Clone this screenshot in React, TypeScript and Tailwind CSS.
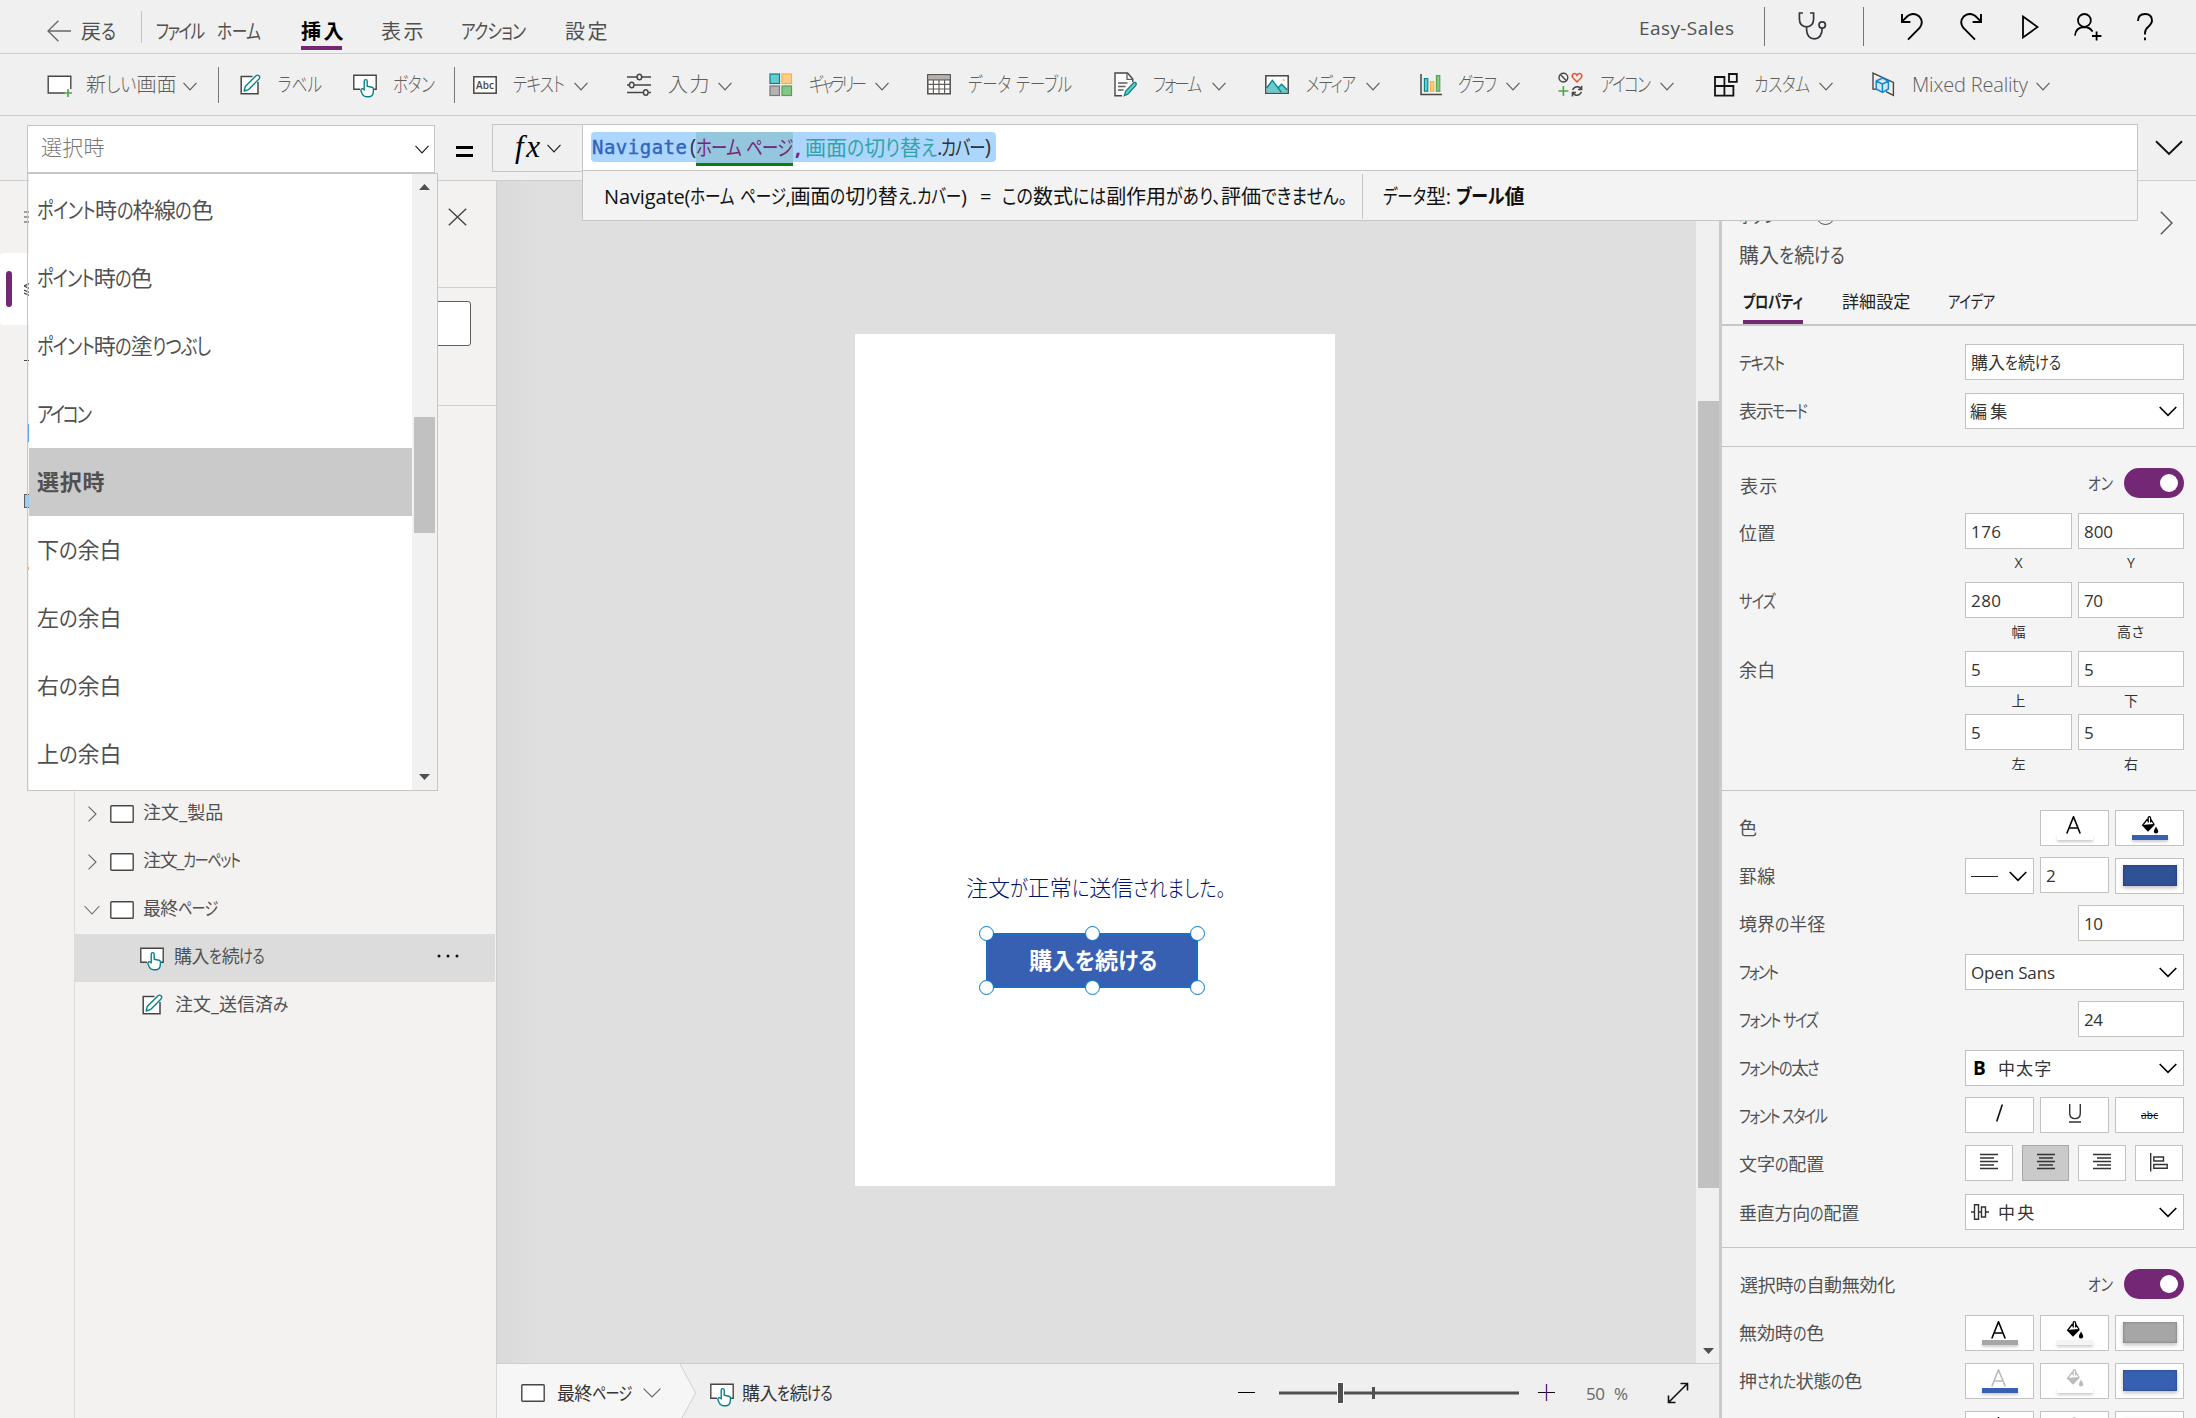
import { useLayoutEffect, useRef, useState } from 'react';
import type { ReactNode } from 'react';
import clsx from 'clsx';

const KANA_RUN = /([\u3040-\u30ff\u3001\u3002]+)/;
const KANJI_END = /[\u4e00-\u9fff]$/;

// Single line label: condenses its kana runs so the text fills the width of the box
function T({ children, className }: { children: string; className?: string }) {
    const box = useRef<HTMLSpanElement>(null);
    const [fit, setFit] = useState<{ scale: number; spacing: number; widths: number[] } | null>(null);
    const runs = children.split(KANA_RUN);

    useLayoutEffect(() => {
        if (!box.current) return;
        const widths = Array.from(box.current.children).map((el) => el.getBoundingClientRect().width);
        const kana = widths.filter((_, i) => i % 2 === 1).reduce((a, b) => a + b, 0);
        const other = widths.filter((_, i) => i % 2 === 0).reduce((a, b) => a + b, 0);
        const bearing = KANJI_END.test(children) ? parseFloat(getComputedStyle(box.current).fontSize) * 0.07 : 0;
        const target = box.current.clientWidth + bearing;
        const scale = kana > 0 ? Math.min(1, Math.max(0.78, (target - other) / kana)) : 1;
        const gaps = Math.max(1, children.length - 1);
        const spacing = children.length > 1 ? (target - other - kana * scale) / gaps : 0;
        setFit({ scale, spacing, widths });
    }, [children]);

    return (
        <span ref={box} className={clsx('block shrink-0 whitespace-pre leading-none', className)}>
            {runs.map((run, i) => {
                if (i % 2 === 0) return <span key={i} style={{ letterSpacing: fit?.spacing }}>{run}</span>;
                const width = fit ? fit.widths[i] * fit.scale + fit.spacing * run.length : undefined;
                return (
                    <span key={i} className="inline-block [font-feature-settings:'palt']" style={{ width }}>
                        <span
                            className="inline-block origin-left"
                            style={fit ? { letterSpacing: fit.spacing / fit.scale, transform: `scaleX(${fit.scale})` } : undefined}
                        >
                            {run}
                        </span>
                    </span>
                );
            })}
        </span>
    );
}

function Svg({ w, h, className, children }: { w: number; h: number; className?: string; children: ReactNode }) {
    return (
        <svg width={w} height={h} viewBox={`0 0 ${w} ${h}`} fill="none" className={clsx('shrink-0', className)}>
            {children}
        </svg>
    );
}

function Chevron({ className }: { className?: string }) {
    return (
        <Svg w={14} h={9} className={className}>
            <path d="M0.5 0.8 L7 7.8 L13.5 0.8" stroke="currentColor" strokeWidth="1.2" />
        </Svg>
    );
}

function SelectChevron() {
    return (
        <Svg w={18} h={11} className="ml-auto text-black">
            <path d="M0.7 1 L9 9.4 L17.3 1" stroke="currentColor" strokeWidth="1.6" />
        </Svg>
    );
}

function ScreenIcon() {
    return (
        <Svg w={24} h={18}>
            <rect x="0.8" y="0.8" width="22.4" height="16.4" rx="0.8" fill="#fff" stroke="#484644" strokeWidth="1.4" />
        </Svg>
    );
}

function ButtonIcon({ className }: { className?: string }) {
    return (
        <Svg w={24} h={24} className={className}>
            <path d="M7 15.3 H0.8 V1.3 H23.2 V15.3 H21" fill="#fff" stroke="#484644" strokeWidth="1.4" />
            <path d="M11.2 16 V7.2 Q11.2 5.6 12.7 5.6 Q14.2 5.6 14.2 7.2 V12.3 L19 13.2 Q20.6 13.6 20.5 15.4 L20.2 18.6 Q19.6 22.7 15.6 22.7 H13.4 Q10.6 22.7 9.2 19.8 L8 17 Q7.6 14.7 9.4 14.6 Q10.4 14.6 11.2 16 Z" fill="#fff" stroke="#038387" strokeWidth="1.4" strokeLinejoin="round" />
        </Svg>
    );
}

function LabelIcon({ className }: { className?: string }) {
    return (
        <Svg w={21} h={21} className={className}>
            <path d="M12.5 2.5 H1.2 V19.8 H18 V8" fill="#fff" stroke="#484644" strokeWidth="1.5" />
            <path d="M4.2 17 L5.2 12.6 L15.8 1.9 Q17.4 0.4 19 1.8 Q20.4 3.3 19 4.9 L8.4 15.7 Z" fill="#fff" stroke="#038387" strokeWidth="1.4" strokeLinejoin="round" />
        </Svg>
    );
}

function NewScreenIcon() {
    return (
        <Svg w={26} h={23}>
            <path d="M18 18 H1.2 V1.2 H23.8 V14" fill="#fff" stroke="#484644" strokeWidth="1.4" />
            <path d="M21 14 V22 M17 18 H25" stroke="#4ca64c" strokeWidth="1.6" />
        </Svg>
    );
}

function AbcIcon() {
    return (
        <Svg w={24} h={18}>
            <rect x="0.8" y="0.8" width="22.4" height="16.4" fill="#fff" stroke="#484644" strokeWidth="1.5" />
            <text x="12" y="13" textAnchor="middle" fontSize="10" fontWeight="600" fill="#484644" fontFamily="Open Sans, sans-serif" textLength="18">Abc</text>
        </Svg>
    );
}

function InputIcon() {
    return (
        <Svg w={24} h={24}>
            <g stroke="#484644" strokeWidth="1.5">
                <path d="M0 4 H10 M15 4 H24 M0 12 H2 M7.5 12 H24 M0 19.5 H16 M21.5 19.5 H24" />
                <ellipse cx="12.4" cy="4" rx="2.3" ry="2.8" />
                <ellipse cx="4.7" cy="12" rx="2.3" ry="2.8" />
                <ellipse cx="18.8" cy="19.5" rx="2.3" ry="2.8" />
            </g>
        </Svg>
    );
}

function GalleryIcon() {
    return (
        <Svg w={24} h={24}>
            <rect x="1" y="1" width="9.5" height="9.5" fill="#69cbcb" stroke="#038387" strokeWidth="1.2" />
            <rect x="13" y="1" width="9.5" height="9.5" fill="#ffcf87" stroke="#ffaa44" strokeWidth="1.2" />
            <rect x="1" y="13" width="9.5" height="9.5" fill="#b3b3b3" stroke="#797775" strokeWidth="1.2" />
            <rect x="13" y="13" width="9.5" height="9.5" fill="#85c585" stroke="#4ca64c" strokeWidth="1.2" />
        </Svg>
    );
}

function TableIcon() {
    return (
        <Svg w={24} h={21}>
            <rect x="0.8" y="0.8" width="22.4" height="19" fill="#fff" stroke="#484644" strokeWidth="1.4" />
            <rect x="1.4" y="1.4" width="21.2" height="4" fill="#b3b0ad" />
            <path d="M0.8 5.8 H23.2 M0.8 10.4 H23.2 M0.8 15 H23.2 M6.4 5.8 V19.6 M12 5.8 V19.6 M17.6 5.8 V19.6" stroke="#605e5c" strokeWidth="1.2" />
        </Svg>
    );
}

function FormIcon() {
    return (
        <Svg w={23} h={25}>
            <path d="M8 23.8 H1 V1 H13.5 L18.8 7 V10" fill="#fff" stroke="#484644" strokeWidth="1.4" />
            <path d="M13 1 V7.4 H19 M4 11 H13.5 M4 14.5 H11.5 M4 18 H9.5" stroke="#605e5c" strokeWidth="1.3" />
            <path d="M10.4 23.6 L11.6 19.4 L19.6 10.8 Q21 9.8 22 11 Q22.6 12.2 21.8 13.4 L14 22 Z" fill="#69cbcb" stroke="#038387" strokeWidth="1.3" />
        </Svg>
    );
}

function MediaIcon() {
    return (
        <Svg w={24} h={19}>
            <rect x="0.8" y="0.8" width="22.4" height="17.4" fill="#fff" stroke="#484644" strokeWidth="1.5" />
            <path d="M1.6 13 L7.4 5.4 L13 12.8 L16.6 9.2 L22.4 15 V17.4 H1.6 Z" fill="#69cbcb" />
            <path d="M1.6 13 L7.4 5.4 L16.4 17.4 M13 12.8 L16.6 9.2 L22.4 15" stroke="#038387" strokeWidth="1.3" />
            <circle cx="18.6" cy="5" r="1" fill="#ffaa44" />
        </Svg>
    );
}

function ChartIcon() {
    return (
        <Svg w={22} h={23}>
            <path d="M1 1 V21.4 H22" stroke="#484644" strokeWidth="1.5" />
            <rect x="4.4" y="5.6" width="3.4" height="12.6" fill="#69cbcb" stroke="#038387" strokeWidth="1.1" />
            <rect x="10.4" y="8.6" width="3.4" height="9.6" fill="#ffcf87" stroke="#ffaa44" strokeWidth="1.1" />
            <rect x="16.4" y="2.6" width="3.4" height="15.6" fill="#85c585" stroke="#4ca64c" strokeWidth="1.1" />
        </Svg>
    );
}

function IconsIcon() {
    return (
        <Svg w={25} h={25}>
            <circle cx="5.4" cy="5.6" r="4.4" stroke="#484644" strokeWidth="1.4" />
            <path d="M2.4 2.6 L8.4 8.8" stroke="#484644" strokeWidth="1.4" />
            <path d="M19 10 L14.6 5.4 Q13.4 2.8 15.6 1.6 Q17.8 1 19 3.4 Q20.2 1 22.4 1.6 Q24.6 2.8 23.4 5.4 Z" stroke="#e8502d" strokeWidth="1.5" />
            <path d="M5.4 14 V24 M0.4 19 H10.4" stroke="#4ca64c" strokeWidth="1.6" />
            <path d="M14.6 17.8 Q16.4 14.2 20 14.8 Q22 15.2 23.2 17 M23.6 13.8 V17.4 H20 M23.4 20 Q21.8 23.6 18.2 23.2 Q16 22.8 14.8 21 M14.4 24.4 V20.6 H18" stroke="#484644" strokeWidth="1.5" />
        </Svg>
    );
}

function CustomIcon() {
    return (
        <Svg w={24} h={24}>
            <path d="M1 13 V4 H10.4 V22.6 M1 13 H19.4 V22.6 H1 V13 M15 1 H22.8 V8.8 H15 Z" stroke="#111" strokeWidth="1.8" />
        </Svg>
    );
}

function MixedRealityIcon() {
    return (
        <Svg w={23} h={25}>
            <path d="M5 17.4 L1 17 V1.2 L21.4 10.4 V23.4 L14 19.6" stroke="#484644" strokeWidth="1.4" />
            <path d="M4.2 9 L10.4 6 L16.4 9 V17 L10.4 20.4 L4.2 17 Z M4.2 9 L10.4 12 L16.4 9 M10.4 12 V20.4" fill="#cfe6f7" stroke="#1a86d0" strokeWidth="1.5" strokeLinejoin="round" />
        </Svg>
    );
}

const tools: { icon: ReactNode; iconCls: string; label: string; labelCls: string; chevron?: string; divider?: string }[] = [
    { icon: <NewScreenIcon />, iconCls: 'ml-[47px] w-[26px] pt-1', label: '新しい画面', labelCls: 'ml-[13px] w-[89px]', chevron: 'ml-2', divider: 'ml-[21px]' },
    { icon: <LabelIcon />, iconCls: 'ml-[21px] w-[21px]', label: 'ラベル', labelCls: 'ml-[17px] w-[44px]' },
    { icon: <ButtonIcon />, iconCls: 'ml-[31px] w-[24px] pt-0.5', label: 'ボタン', labelCls: 'ml-[16px] w-[42px]', divider: 'ml-[19px]' },
    { icon: <AbcIcon />, iconCls: 'ml-[18px] w-[24px]', label: 'テキスト', labelCls: 'ml-[16px] w-[52px]', chevron: 'ml-[9px]' },
    { icon: <InputIcon />, iconCls: 'ml-[39px] w-[24px]', label: '入力', labelCls: 'ml-[17px] w-[40px]', chevron: 'ml-[10px]' },
    { icon: <GalleryIcon />, iconCls: 'ml-[37px] w-[24px]', label: 'ギャラリー', labelCls: 'ml-[16px] w-[58px]', chevron: 'ml-[8px]' },
    { icon: <TableIcon />, iconCls: 'ml-[38px] w-[24px]', label: 'データ テーブル', labelCls: 'ml-[17px] w-[104px]' },
    { icon: <FormIcon />, iconCls: 'ml-[42px] w-[23px]', label: 'フォーム', labelCls: 'ml-[16px] w-[49px]', chevron: 'ml-[10px]' },
    { icon: <MediaIcon />, iconCls: 'ml-[39px] w-[24px]', label: 'メディア', labelCls: 'ml-[17px] w-[50px]', chevron: 'ml-[10px]' },
    { icon: <ChartIcon />, iconCls: 'ml-[40px] w-[22px]', label: 'グラフ', labelCls: 'ml-[16px] w-[39px]', chevron: 'ml-[9px]' },
    { icon: <IconsIcon />, iconCls: 'ml-[38px] w-[25px]', label: 'アイコン', labelCls: 'ml-[17px] w-[51px]', chevron: 'ml-[9px]' },
    { icon: <CustomIcon />, iconCls: 'ml-[40px] w-[24px]', label: 'カスタム', labelCls: 'ml-[16px] w-[56px]', chevron: 'ml-[9px]' },
    { icon: <MixedRealityIcon />, iconCls: 'ml-[39px] w-[23px]', label: 'Mixed Reality', labelCls: 'ml-[17px] w-[116px]', chevron: 'ml-[8px]' },
];

function TitleBar() {
    return (
        <div className="flex h-[54px] items-center border-b border-[#cdcdcd] pr-[43px] pl-[47px] text-xl text-[#505050]">
            <Svg w={24} h={22} className="mt-[9px]">
                <path d="M11.4 0.8 L1 11 L11.4 21.2 M1 11 H24" stroke="#666" strokeWidth="1.3" />
            </Svg>
            <T className="mt-[10px] ml-[10px] w-[35px]">戻る</T>
            <div className="ml-[25px] h-8 w-px bg-[#c4c4c4]" />
            <T className="mt-[10px] ml-[14px] w-[49px]">ファイル</T>
            <T className="mt-[10px] ml-[12px] w-[44px]">ホーム</T>
            <div className="mt-[19px] ml-[40px] border-b-4 border-[#742774] pb-1">
                <T className="w-[41px] font-bold text-black">挿入</T>
            </div>
            <T className="mt-[10px] ml-[39px] w-[41px]">表示</T>
            <T className="mt-[10px] ml-[39px] w-[65px]">アクション</T>
            <T className="mt-[10px] ml-[39px] w-[41px]">設定</T>
            <T className="mt-[4px] ml-auto w-[95px] text-[19px]">Easy-Sales</T>
            <div className="ml-[30px] h-[39px] w-px bg-[#777]" />
            <Svg w={29} h={28} className="-mt-px ml-[33px]">
                <path d="M5 1 H1.4 V7 Q1.6 14.6 8.6 14.8 Q15.4 14.6 15.6 7 V1 H12 M8.6 14.8 V18 Q9 26.6 16.6 26.8 Q24 26.4 24.2 16" stroke="#33373d" strokeWidth="1.7" />
                <circle cx="24.2" cy="13" r="3.2" stroke="#33373d" strokeWidth="1.7" />
            </Svg>
            <div className="ml-[36px] h-[39px] w-px bg-[#777]" />
            <Svg w={22} h={28} className="ml-[37px] text-black">
                <path d="M1 1 V9 H9.4 M1 8.6 L6.6 3 Q12.4 -1.4 18.4 3.6 Q23 8.8 18.8 14.6 L7 26.6" stroke="currentColor" strokeWidth="1.9" />
            </Svg>
            <Svg w={22} h={28} className="ml-[37px] text-black">
                <path d="M21 1 V9 H12.6 M21 8.6 L15.4 3 Q9.6 -1.4 3.6 3.6 Q-1 8.8 3.2 14.6 L15 26.6" stroke="currentColor" strokeWidth="1.9" />
            </Svg>
            <Svg w={17} h={24} className="ml-[40px] text-black">
                <path d="M1 1.6 L15.6 12 L1 22.4 Z" stroke="currentColor" strokeWidth="1.8" />
            </Svg>
            <Svg w={28} h={28} className="ml-[35px] text-black">
                <circle cx="10.4" cy="7.4" r="6.4" stroke="currentColor" strokeWidth="1.8" />
                <path d="M1 22.6 Q1.6 14.4 10.4 14 Q16 14.2 18.6 18.6 M22.6 18.4 V27.4 M18 23 H27.4" stroke="currentColor" strokeWidth="1.8" />
            </Svg>
            <Svg w={16} h={28} className="ml-[35px] text-black">
                <path d="M1 8 Q1 1 8 1 Q15 1 15 7.6 Q15 10.6 11.6 13.4 Q8 16.2 8 20 V21.6 M8 24.6 V27.2" stroke="currentColor" strokeWidth="1.9" />
            </Svg>
        </div>
    );
}

function Ribbon() {
    return (
        <div className="flex h-[62px] items-center border-b border-[#cdcdcd] text-xl text-[#605e5c]">
            {tools.map((tool) => (
                <div key={tool.label} className="flex items-center">
                    <div className={clsx('shrink-0', tool.iconCls)}>{tool.icon}</div>
                    <T className={clsx('mt-px font-light', tool.labelCls)}>{tool.label}</T>
                    {tool.chevron && <Chevron className={clsx('mt-1', tool.chevron)} />}
                    {tool.divider && <div className={clsx('h-9 w-px bg-[#777]', tool.divider)} />}
                </div>
            ))}
        </div>
    );
}

function FormulaBar() {
    return (
        <div className="relative z-10 flex h-[65px] border-b border-[#cdcdcd] pt-2">
            <div className="mt-px ml-[27px] flex h-[48px] w-[408px] items-center border border-[#c8c6c4] bg-white pr-[5px] pl-[13px]">
                <T className="-mt-[3px] w-[62px] text-[21px] font-light text-[#777]">選択時</T>
                <Chevron className="ml-auto text-[#222]" />
            </div>
            <div className="mt-[22px] ml-[21px] h-[11px] w-[17px] border-y-[3px] border-black" />
            <div className="ml-[19px] flex h-[48px] w-[90px] items-center border border-r-0 border-[#c8c6c4] pl-[22px]">
                <T className="-mt-1 w-[25px] font-['Liberation_Serif',serif] text-[31px] text-black italic">fx</T>
                <Chevron className="ml-[7px] text-[#222]" />
            </div>
            <div className="h-[97px] w-[1556px] border border-[#c8c6c4] bg-[#f3f3f3]">
                <div className="flex h-[46px] items-center border-b border-[#c8c6c4] bg-white pl-[8px]">
                    <div className="mb-px flex h-[30px] w-[405px] items-center rounded bg-[#add6ff] text-[21px]">
                        <T className="ml-px w-[95px] font-['DejaVu_Sans_Mono',monospace] text-[19px] text-[#3165bb] [-webkit-text-stroke:0.4px_#3165bb]">Navigate</T>
                        <T className="ml-[3px] w-[6px] text-[#333]">(</T>
                        <div className="-mb-1 flex h-[34px] items-center border-b-[3px] border-[#107c10] bg-[#94c6dd]">
                            <T className="w-[97px] text-[#742774]">ホーム ページ</T>
                        </div>
                        <T className="ml-[2px] w-[8px] font-bold text-[#742774]">,</T>
                        <T className="ml-[2px] w-[132px] text-[#30a5a5]">画面の切り替え</T>
                        <T className="w-[54px] text-[#333]">.カバー)</T>
                    </div>
                </div>
                <div className="flex h-[50px] items-center pt-px text-[20px] text-[#111]">
                    <T className="ml-[21px] w-[363px]">Navigate(ホーム ページ,画面の切り替え.カバー)</T>
                    <T className="ml-[13px] w-[12px]">=</T>
                    <T className="ml-[10px] w-[345px]">この数式には副作用があり、評価できません。</T>
                    <div className="ml-[15px] h-[45px] w-px bg-[#c8c6c4]" />
                    <T className="ml-[20px] w-[68px]">データ型:</T>
                    <T className="ml-[5px] w-[67px] font-bold">ブール値</T>
                </div>
            </div>
            <Svg w={28} h={16} className="mt-[16px] ml-[17px]">
                <path d="M1 1.2 L14 14 L27 1.2" stroke="#111" strokeWidth="1.9" />
            </Svg>
        </div>
    );
}

const options = [
    { label: 'ポイント時の枠線の色', cls: 'w-[175px]' },
    { label: 'ポイント時の色', cls: 'w-[114px]' },
    { label: 'ポイント時の塗りつぶし', cls: 'w-[174px]' },
    { label: 'アイコン', cls: 'w-[55px]' },
    { label: '選択時', cls: 'w-[66px] font-bold' },
    { label: '下の余白', cls: 'w-[83px]' },
    { label: '左の余白', cls: 'w-[83px]' },
    { label: '右の余白', cls: 'w-[83px]' },
    { label: '上の余白', cls: 'w-[83px]' },
];

function PropertyDropdown() {
    return (
        <div className="absolute top-[173px] left-[27px] z-20 flex h-[618px] w-[411px] border border-[#c8c6c4] pl-px text-[22px] text-[#505050]">
            <div className="flex-1 bg-white pt-0.5">
                {options.map((o) => (
                    <div key={o.label} className={clsx('flex h-[68px] items-center pb-[3px] pl-2', o.label === '選択時' && 'bg-[#cacaca]')}>
                        <T className={o.cls}>{o.label}</T>
                    </div>
                ))}
            </div>
            <div className="flex w-[25px] flex-col items-center bg-[#f1f1f1] pt-[10px] pb-[10px]">
                <Svg w={11} h={6}><path d="M0 6 L5.5 0 L11 6 Z" fill="#505050" /></Svg>
                <div className="mt-[227px] h-[116px] w-[21px] bg-[#c1c1c1]" />
                <Svg w={11} h={6} className="mt-auto"><path d="M0 0 L5.5 6 L11 0 Z" fill="#505050" /></Svg>
            </div>
        </div>
    );
}

function Rail() {
    return (
        <div className="w-[75px] shrink-0 border-r border-[#dcdcdc]">
            <div className="flex h-[72px] items-center pl-6">
                <Svg w={20} h={12} className="-mt-px"><path d="M0 1 H20 M0 6 H20 M0 11 H20" stroke="#444" strokeWidth="1.2" /></Svg>
            </div>
            <div className="flex h-[72px] items-center rounded-l bg-white pl-1.5">
                <div className="h-9 w-1.5 rounded-full bg-[#742774]" />
                <Svg w={20} h={15} className="ml-3"><path d="M0 4 L9 0 M0 4 L9 8 M0 8 L9 12 M0 11 L9 15" stroke="#444" strokeWidth="1.3" /></Svg>
            </div>
            <div className="mt-[35px] ml-6 h-px w-5 bg-[#444]" />
            <div className="mt-[63px] ml-[27px] h-[18px] w-4 bg-[#5aa5e0]" />
            <div className="mt-[52px] ml-6 h-[14px] w-4 border border-[#605e5c] bg-[#9ccbf0]" />
            <div className="mt-[59px] ml-[27px] h-[3px] w-3 bg-[#ffaa44]" />
        </div>
    );
}

function TreeRow({ open, label, cls }: { open?: boolean; label: string; cls: string }) {
    return (
        <div className="flex h-[48px] items-center pb-1">
            <div className="flex w-[34px] justify-center pt-1">
                <Svg w={16} h={16}>
                    <path d={open ? 'M0.6 4 L8 12 L15.4 4' : 'M4.5 0.6 L12 8 L4.5 15.4'} stroke="#666" strokeWidth="1.1" />
                </Svg>
            </div>
            <div className="ml-px pt-1"><ScreenIcon /></div>
            <T className={clsx('ml-[9px]', cls)}>{label}</T>
        </div>
    );
}

function TreePanel() {
    return (
        <div className="flex w-[421px] shrink-0 flex-col text-[18px] text-[#505050]">
            <div className="flex h-[107px] justify-end border-b border-[#d2d0ce] pt-[27px] pr-[29px]">
                <Svg w={19} h={18}>
                    <path d="M0.8 0.8 L18.2 17.2 M18.2 0.8 L0.8 17.2" stroke="#444" strokeWidth="1.4" />
                </Svg>
            </div>
            <div className="h-[118px] border-b border-[#d2d0ce] pt-[13px] pl-5">
                <div className="h-[45px] w-[376px] rounded-[3px] border border-[#605e5c] bg-white" />
            </div>
            <div className="mt-[384px]">
                <TreeRow label="注文_製品" cls="w-[79px]" />
                <TreeRow label="注文_カーペット" cls="w-[98px]" />
                <TreeRow open label="最終ページ" cls="w-[75px]" />
            </div>
            <div className="mr-px flex h-[48px] items-center bg-[#dcdcdc] pr-[36px] pl-[65px]">
                <ButtonIcon className="mt-0.5" />
                <T className="mb-1 ml-[10px] w-[91px]">購入を続ける</T>
                <Svg w={22} h={4} className="mb-1 ml-auto">
                    <g fill="#111"><circle cx="2" cy="2" r="1.5" /><circle cx="11" cy="2" r="1.5" /><circle cx="20" cy="2" r="1.5" /></g>
                </Svg>
            </div>
            <div className="flex h-[48px] items-center pl-[67px]">
                <LabelIcon className="mb-1" />
                <T className="mb-1 ml-[12px] w-[113px]">注文_送信済み</T>
            </div>
        </div>
    );
}

const handles = [
    '-top-[9px] -left-[9px]',
    '-top-[9px] left-[96.5px]',
    '-top-[9px] -right-[9px]',
    '-bottom-[9px] -left-[9px]',
    '-bottom-[9px] left-[96.5px]',
    '-bottom-[9px] -right-[9px]',
];

function Canvas() {
    return (
        <div className="flex h-[1183px] border-b border-l border-[#cfcfcf] bg-[#dfdfdf]">
            <div className="flex-1 bg-linear-to-r from-[#dadada] to-[#dfdfdf] to-[40px] pt-[153px] pl-[358px]">
                <div className="h-[852px] w-[480px] bg-white pt-[542px]">
                    <T className="ml-[111px] w-[260px] text-[22px] font-light text-[#00126b]">注文が正常に送信されました。</T>
                    <div className="relative mt-[35px] ml-[131px] flex h-[55px] w-[212px] items-center justify-center border-2 border-[#1a6fc4] bg-[#3860b2]">
                        <T className="ml-0.5 w-[128px] text-[23px] font-bold text-white">購入を続ける</T>
                        {handles.map((h) => (
                            <div key={h} className={clsx('absolute size-[15px] rounded-full border border-[#0078d4] bg-white', h)} />
                        ))}
                    </div>
                </div>
            </div>
            <div className="flex w-[23px] flex-col items-center bg-[#f0f0f0] pt-[220px] pb-[9px]">
                <div className="ml-0.5 h-[787px] w-[21px] bg-[#c1c1c1]" />
                <Svg w={11} h={6} className="mt-auto ml-0.5"><path d="M0 0 L5.5 6 L11 0 Z" fill="#505050" /></Svg>
            </div>
        </div>
    );
}

function StatusBar() {
    return (
        <div className="flex h-[54px] items-center border-l border-[#d8d8d8] bg-[#efefef] text-[18px] text-[#333]">
            <div className="flex h-full w-[183px] items-center bg-[#f6f6f6] pt-[4px] pl-[24px]">
                <ScreenIcon />
                <T className="ml-3 w-[75px]">最終ページ</T>
                <Svg w={18} h={10} className="ml-[11px]"><path d="M0.6 0.6 L9 9 L17.4 0.6" stroke="#666" strokeWidth="1.2" /></Svg>
            </div>
            <Svg w={17} h={54}>
                <path d="M0 0 L15.6 29 L2 54 H0 Z" fill="#f6f6f6" />
                <path d="M0 0 L15.6 29 L2 54" stroke="#d0d0d0" />
            </Svg>
            <ButtonIcon className="mt-2 ml-[13px]" />
            <T className="mt-1 ml-[8px] w-[91px]">購入を続ける</T>
            <div className="mt-[3px] ml-[405px] h-px w-[17px] bg-black" />
            <Svg w={241} h={22} className="mt-[3px] ml-[24px]">
                <path d="M0 11 H240" stroke="#505050" strokeWidth="3" />
                <rect x="58" y="0" width="7" height="22" fill="#fff" />
                <rect x="59" y="1" width="5" height="20" fill="#505050" />
                <rect x="93" y="5" width="3" height="12" fill="#505050" />
            </Svg>
            <Svg w={17} h={17} className="mt-[3px] ml-[18px]">
                <path d="M0 8.5 H17" stroke="#111" />
                <path d="M8.5 0 V17" stroke="#5a1a78" strokeWidth="1.3" />
            </Svg>
            <T className="mt-1 ml-[31px] w-[19px] text-[17px] text-[#666]">50</T>
            <T className="mt-1 ml-[9px] w-[15px] text-[17px] text-[#666]">%</T>
            <Svg w={22} h={22} className="mt-[3px] ml-[38px]">
                <path d="M2 20 L20 2 M13.5 1.5 H20.5 V8.5 M1.5 13.5 V20.5 H8.5" stroke="#111" strokeWidth="1.6" />
            </Svg>
        </div>
    );
}

function Row({ label, w, className, children }: { label: string; w: string; className?: string; children: ReactNode }) {
    return (
        <div className={clsx('flex h-9 items-center pr-3 pl-[17px]', className)}>
            {label && <T className={clsx('text-[#505050]', w)}>{label}</T>}
            <div className="ml-auto flex items-center gap-1.5">{children}</div>
        </div>
    );
}

function Box({ active, className, children }: { active?: boolean; className?: string; children?: ReactNode }) {
    return (
        <div
            className={clsx(
                'flex h-9 items-center border text-[17px] text-[#333]',
                active ? 'border-[#a8a8a8] bg-[#cacaca]' : 'border-[#c2c2c2] bg-white',
                className
            )}
        >
            {children}
        </div>
    );
}

function Field({ value, w, className }: { value: string; w: string; className?: string }) {
    return (
        <Box className={clsx('pl-[5px]', className)}>
            <T className={w}>{value}</T>
        </Box>
    );
}

function Captions({ left, right }: { left: string; right: string }) {
    return (
        <div className="flex h-[27px] justify-end gap-1.5 pr-3 text-center text-[14px] text-[#333]">
            <span className="w-[107px] pt-[7px] leading-none">{left}</span>
            <span className="w-[106px] pt-[7px] leading-none">{right}</span>
        </div>
    );
}

function Toggle() {
    return (
        <>
            <T className="w-[25px] text-[17px] text-[#505050]">オン</T>
            <div className="ml-[5px] flex h-[30px] w-[60px] items-center justify-end rounded-full bg-[#742774] pr-[6px]">
                <div className="size-[18px] rounded-full bg-white" />
            </div>
        </>
    );
}

function FontColor({ bar, dim }: { bar: string; dim?: boolean }) {
    return (
        <Box className="w-[69px] flex-col justify-start pt-[5px]">
            <Svg w={15} h={18} className={clsx('-ml-0.5', dim ? 'text-[#bbb]' : 'text-black')}>
                <path d="M0.8 17.5 L7.5 0.8 L14.2 17.5 M3 12 H12" stroke="currentColor" strokeWidth="1.6" />
            </Svg>
            <div className={clsx('mt-[1px] h-[5px] w-9 shadow-[0_2px_3px_rgba(0,0,0,0.2)]', bar)} />
        </Box>
    );
}

function FillColor({ bar, dim }: { bar: string; dim?: boolean }) {
    return (
        <Box className="w-[69px] flex-col justify-start pt-[5px]">
            <Svg w={18} h={18} className={dim ? 'text-[#bbb]' : 'text-black'}>
                <path d="M7.2 6.5 V2 Q7.2 0.7 8.4 0.7 Q9.6 0.7 9.6 2 V6.5 M6.5 3 L1.5 9.4 M9.6 3 L13.2 8.5" stroke="currentColor" strokeWidth="1.3" />
                <path d="M0.6 9 L12.8 8 L13.6 9 L7 15.8 Z" fill="currentColor" />
                <path d="M15 10.5 Q19.4 17.5 15 17.6 Q10.8 17.5 15 10.5 Z" fill="currentColor" />
            </Svg>
            <div className={clsx('mt-[1px] h-[5px] w-9 shadow-[0_2px_3px_rgba(0,0,0,0.2)]', bar)} />
        </Box>
    );
}

function Swatch({ color }: { color: string }) {
    return (
        <Box className="w-[69px] justify-center">
            <div className={clsx('mt-[-1px] h-[21px] w-[54px] shadow-[0_2px_4px_rgba(0,0,0,0.25),inset_0_0_3px_rgba(0,0,0,0.3)]', color)} />
        </Box>
    );
}

function AlignIcon({ d }: { d: string }) {
    return <Svg w={18} h={17} className="mb-1"><path d={d} stroke="#333" strokeWidth="1.5" /></Svg>;
}

function PropertiesPanel() {
    return (
        <div className="h-[1237px] w-[477px] shrink-0 overflow-hidden border-l-[3px] border-[#cbcbcb] bg-[#f4f4f4] text-[18px]">
            <div className="flex h-[62px] items-center pt-[4px] pr-[23px] pl-[17px] text-[#505050]">
                <T className="mt-[4px] w-[38px] text-[17px]">ボタン</T>
                <div className="mt-[3px] ml-[39px] size-[19px] rounded-full border border-[#505050]" />
                <Svg w={13} h={24} className="mt-[18px] ml-auto"><path d="M0.8 0.8 L12 12 L0.8 23.2" stroke="#555" strokeWidth="1.4" /></Svg>
            </div>
            <T className="mt-[3px] ml-[17px] w-[106px] text-[20px] text-[#505050]">購入を続ける</T>
            <div className="mt-[27px] flex h-[33px] border-b-2 border-[#c8c6c4] pl-[21px] text-[17px] text-[#222]">
                <div className="h-[31px] border-b-4 border-[#742774]"><T className="w-[60px] font-bold">プロパティ</T></div>
                <T className="ml-[39px] w-[67px]">詳細設定</T>
                <T className="ml-[39px] w-[47px]">アイデア</T>
            </div>
            <Row label="テキスト" w="mt-px w-[46px]" className="mt-[18px]">
                <Field value="購入を続ける" w="w-[90px]" className="w-[219px]" />
            </Row>
            <Row label="表示モード" w="w-[69px]" className="mt-[13px]">
                <Box className="w-[219px] pr-[6px] pl-[4px]"><T className="w-[36px]">編集</T><SelectChevron /></Box>
            </Row>
            <div className="mt-[17px] h-px bg-[#c8c6c4]" />
            <Row label="表示" w="ml-px mt-[5px] w-[36px]" className="mt-[18px]"><Toggle /></Row>
            <Row label="位置" w="mt-[3px] w-[35px]" className="mt-[12px]">
                <Field value="176" w="w-[30px]" className="w-[107px]" />
                <Field value="800" w="w-[29px]" className="w-[106px]" />
            </Row>
            <Captions left="X" right="Y" />
            <Row label="サイズ" w="mt-px w-[37px]" className="mt-[6px]">
                <Field value="280" w="w-[30px]" className="w-[107px]" />
                <Field value="70" w="w-[19px]" className="w-[106px]" />
            </Row>
            <Captions left="幅" right="高さ" />
            <Row label="余白" w="mt-0.5 w-[35px]" className="mt-[6px]">
                <Field value="5" w="w-[10px]" className="w-[107px]" />
                <Field value="5" w="w-[10px]" className="w-[106px]" />
            </Row>
            <Captions left="上" right="下" />
            <Row label="" w="">
                <Field value="5" w="w-[10px]" className="w-[107px]" />
                <Field value="5" w="w-[10px]" className="w-[106px]" />
            </Row>
            <Captions left="左" right="右" />
            <div className="mt-[13px] h-px bg-[#c8c6c4]" />
            <Row label="色" w="w-[18px]" className="mt-[19px]">
                <FontColor bar="bg-white" />
                <FillColor bar="bg-[#3860b2]" />
            </Row>
            <Row label="罫線" w="w-[35px]" className="mt-[12px]">
                <Box className="w-[69px] pr-[6px] pl-[5px]"><div className="h-px w-[27px] bg-[#222]" /><SelectChevron /></Box>
                <Field value="2" w="w-[10px]" className="-mt-0.5 w-[69px]" />
                <Swatch color="bg-[#2f5195]" />
            </Row>
            <Row label="境界の半径" w="mt-px w-[85px]" className="mt-[11px]">
                <Field value="10" w="w-[19px]" className="w-[106px]" />
            </Row>
            <Row label="フォント" w="w-[40px]" className="mt-[13px]">
                <Box className="w-[219px] pr-[6px] pl-[5px]"><T className="w-[84px]">Open Sans</T><SelectChevron /></Box>
            </Row>
            <Row label="フォント サイズ" w="mt-px w-[80px]" className="mt-[11px]">
                <Field value="24" w="w-[19px]" className="w-[106px]" />
            </Row>
            <Row label="フォントの太さ" w="w-[81px]" className="mt-[13px]">
                <Box className="w-[219px] pr-[6px] pl-[7px]"><T className="w-[13px] text-[19px] font-bold text-black">B</T><T className="ml-[12px] w-[52px]">中太字</T><SelectChevron /></Box>
            </Row>
            <Row label="フォント スタイル" w="mt-px w-[89px]" className="mt-[11px]">
                <Box className="w-[69px] justify-center"><Svg w={7} h={18} className="mb-1"><path d="M6.3 0.5 L0.7 17.5" stroke="#111" strokeWidth="1.6" /></Svg></Box>
                <Box className="w-[69px] justify-center"><Svg w={14} h={19} className="mb-1"><path d="M1.7 0 V9 Q1.7 14.6 7 14.6 Q12.3 14.6 12.3 9 V0 M1 18 H13" stroke="#333" strokeWidth="1.4" /></Svg></Box>
                <Box className="w-[69px] justify-center"><T className="w-[17px] text-[10px] text-black line-through">abc</T></Box>
            </Row>
            <Row label="文字の配置" w="mt-px w-[84px]" className="mt-[12px]">
                <div className="flex w-[219px] gap-[9px]">
                    <Box className="w-[48px] justify-center"><AlignIcon d="M0 1.5 H18 M0 5 H14 M0 8.5 H18 M0 12 H14 M0 15.5 H18" /></Box>
                    <Box active className="w-[47px] justify-center"><AlignIcon d="M0 1.5 H18 M2 5 H16 M0 8.5 H18 M2 12 H16 M0 15.5 H18" /></Box>
                    <Box className="w-[48px] justify-center"><AlignIcon d="M0 1.5 H18 M4 5 H18 M0 8.5 H18 M4 12 H18 M0 15.5 H18" /></Box>
                    <Box className="w-[48px] justify-center">
                        <Svg w={18} h={19} className="mb-0.5"><path d="M0.7 0 V18.5 M3.8 4 H13.5 V8 H3.8 Z M3.8 11.5 H17.2 V15.3 H3.8 Z" stroke="#333" strokeWidth="1.4" /></Svg>
                    </Box>
                </div>
            </Row>
            <Row label="垂直方向の配置" w="mt-px w-[119px]" className="mt-[13px]">
                <Box className="w-[219px] pr-[6px] pl-[5px]">
                    <Svg w={18} h={16}><path d="M0 8 H3.5 M7.5 8 H10.5 M14.5 8 H18 M3.5 0.7 H7.5 V15.3 H3.5 Z M10.5 3 H14.5 V13 H10.5 Z" stroke="#333" strokeWidth="1.4" /></Svg>
                    <T className="ml-[9px] w-[35px]">中央</T>
                    <SelectChevron />
                </Box>
            </Row>
            <div className="mt-[17px] h-px bg-[#c8c6c4]" />
            <Row label="選択時の自動無効化" w="ml-px mt-0.5 w-[154px]" className="mt-[18px]"><Toggle /></Row>
            <Row label="無効時の色" w="w-[84px]" className="mt-[13px]">
                <FontColor bar="bg-[#a6a6a6]" />
                <FillColor bar="bg-[#f4f4f4]" />
                <Swatch color="bg-[#a6a6a6]" />
            </Row>
            <Row label="押された状態の色" w="w-[122px]" className="mt-[12px]">
                <FontColor bar="bg-[#3860b2]" dim />
                <FillColor bar="bg-white" dim />
                <Swatch color="bg-[#3860b2]" />
            </Row>
            <Row label="" w="" className="mt-[12px]">
                <FontColor bar="bg-white" />
                <FillColor bar="bg-white" dim />
                <Swatch color="bg-[#3860b2]" />
            </Row>
        </div>
    );
}

export default function App() {
    return (
        <div className="relative h-[1418px] w-[2196px] overflow-hidden bg-[#f0f0f0] font-['Open_Sans','Noto_Sans_CJK_JP',sans-serif]">
            <TitleBar />
            <Ribbon />
            <FormulaBar />
            <PropertyDropdown />
            <div className="flex h-[1237px] bg-[#f3f2f1]">
                <Rail />
                <TreePanel />
                <div className="w-[1223px] shrink-0">
                    <Canvas />
                    <StatusBar />
                </div>
                <PropertiesPanel />
            </div>
        </div>
    );
}
